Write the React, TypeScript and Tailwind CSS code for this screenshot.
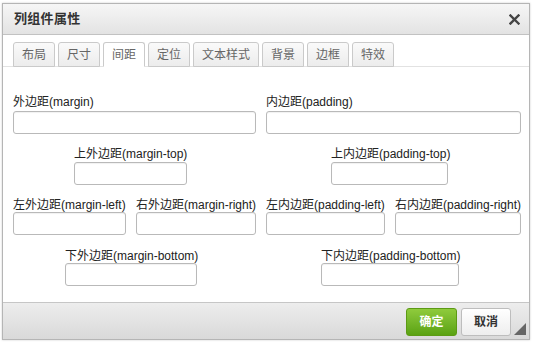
import React from 'react'

const tabs = ['布局', '尺寸', '间距', '定位', '文本样式', '背景', '边框', '特效']

function Field({ label, className, inputClass, gap }: { label: string; className?: string; inputClass: string; gap: string }) {
  return (
    <div className={className}>
      <div className="text-[12px] leading-[14px] text-[#222] whitespace-nowrap">{label}</div>
      <input className={`block h-[23px] rounded-[3px] border border-[#b9b9b9] bg-white shadow-[inset_0_1px_1px_rgba(0,0,0,0.06)] ${gap} ${inputClass}`} />
    </div>
  )
}

export default function App() {
  return (
    <div className="w-[534px] h-[342px] bg-white overflow-hidden font-['Liberation_Sans','Noto_Sans_CJK_SC',sans-serif]">
      {/* dialog */}
      <div className="ml-[2px] mt-[3px] w-[528px] h-[337px] flex flex-col border border-[#b5b5b5] bg-white shadow-[0_0_2px_rgba(0,0,0,0.2)]">
        {/* title bar */}
        <div className="h-[31px] flex items-center justify-between pl-[11px] pr-[8px] border-b border-[#c2c2c2] bg-gradient-to-b from-[#f6f6f6] to-[#e3e3e3]">
          <span className="text-[13px] font-bold text-[#333] tracking-[0.3px]">列组件属性</span>
          <svg width="11" height="11" viewBox="0 0 11 11" className="mr-[1px]">
            <path d="M1.5 1.5 L9.5 9.5 M9.5 1.5 L1.5 9.5" stroke="#444" strokeWidth="2.4" strokeLinecap="square" />
          </svg>
        </div>

        {/* tab strip */}
        <div className="h-[32px] flex items-end gap-[3px] pl-[10px] border-b border-[#e2e2e2] bg-white">
          {tabs.map((t) => {
            const active = t === '间距'
            return (
              <div
                key={t}
                className={`h-[25px] px-[8px] flex items-center rounded-t-[3px] border border-[#cacaca] text-[12px] text-[#666] -mb-px ${
                  active ? 'bg-white border-b-white' : 'bg-gradient-to-b from-[#fafafa] to-[#ececec]'
                }`}
              >
                {t}
              </div>
            )
          })}
        </div>

        {/* content */}
        <div className="flex-1 pl-[10px] pr-[8px] pt-[28px]">
          <div className="flex gap-[10px]">
            <Field label="外边距(margin)" className="w-[243px]" inputClass="w-[243px]" gap="mt-[2px]" />
            <Field label="内边距(padding)" className="w-[255px]" inputClass="w-[255px]" gap="mt-[2px]" />
          </div>

          <div className="flex gap-[10px] mt-[13px]">
            <div className="w-[243px]">
              <Field label="上外边距(margin-top)" className="ml-[61px]" inputClass="w-[113px]" gap="mt-px" />
            </div>
            <div className="w-[255px]">
              <Field label="上内边距(padding-top)" className="ml-[65px]" inputClass="w-[117px]" gap="mt-px" />
            </div>
          </div>

          <div className="flex gap-[10px] mt-[13px]">
            <Field label="左外边距(margin-left)" className="w-[113px]" inputClass="w-[113px]" gap="mt-0" />
            <Field label="右外边距(margin-right)" className="w-[120px]" inputClass="w-[120px]" gap="mt-0" />
            <Field label="左内边距(padding-left)" className="w-[119px]" inputClass="w-[119px]" gap="mt-0" />
            <Field label="右内边距(padding-right)" className="w-[126px]" inputClass="w-[126px]" gap="mt-0" />
          </div>

          <div className="flex gap-[10px] mt-[14px]">
            <div className="w-[243px]">
              <Field label="下外边距(margin-bottom)" className="ml-[52px]" inputClass="w-[132px]" gap="mt-0" />
            </div>
            <div className="w-[255px]">
              <Field label="下内边距(padding-bottom)" className="ml-[55px]" inputClass="w-[138px]" gap="mt-0" />
            </div>
          </div>
        </div>

        {/* footer */}
        <div className="relative h-[37px] flex items-start justify-end gap-[4px] pt-[5px] pr-[18px] border-t border-[#c6c6c6] bg-gradient-to-b from-[#ededed] to-[#d9d9d9]">
          <button className="h-[28px] w-[51px] rounded-[3px] border border-[#5c9a14] bg-gradient-to-b from-[#8fcb3c] to-[#5aa211] text-[12px] font-bold text-white">
            确定
          </button>
          <button className="h-[28px] w-[50px] rounded-[3px] border border-[#bdbdbd] bg-gradient-to-b from-white to-[#eeeeee] text-[12px] font-bold text-[#333]">
            取消
          </button>
          <svg width="12" height="12" viewBox="0 0 12 12" className="absolute right-[3px] bottom-[4px]">
            <path d="M12 0 L12 12 L0 12 Z" fill="#666" />
          </svg>
        </div>
      </div>
    </div>
  )
}
